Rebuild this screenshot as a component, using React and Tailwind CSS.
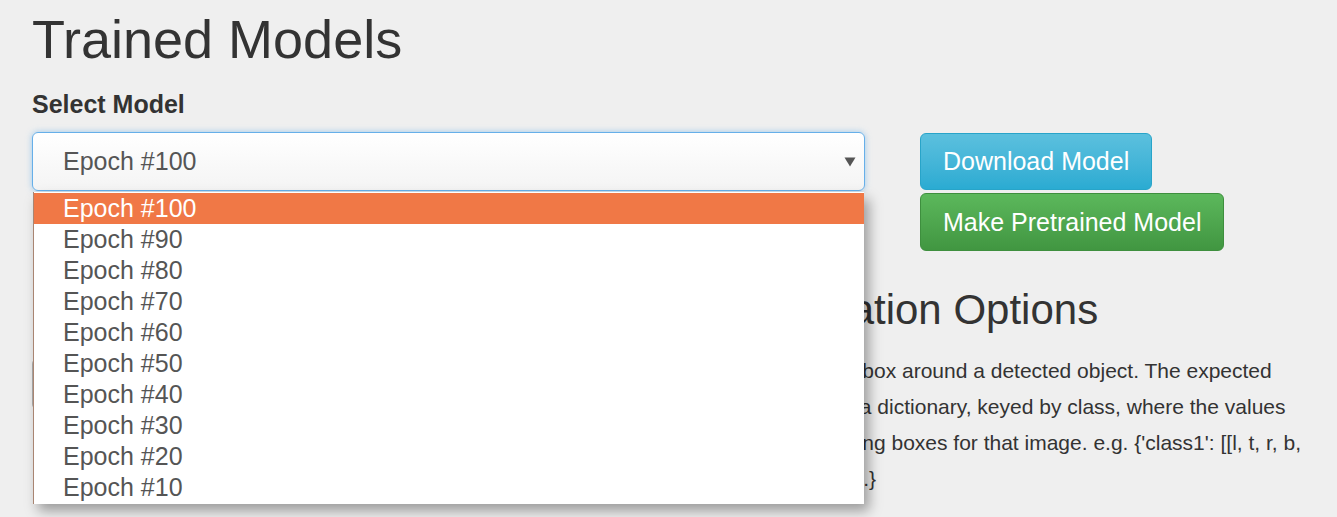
const epochs = [100, 90, 80, 70, 60, 50, 40, 30, 20, 10];

function ModelSelect() {
  return (
    <div className="relative w-[833px]">
      {/* closed select, focused */}
      <div className="flex h-[59px] items-center justify-between rounded-[6px] border border-[#66afe9] bg-gradient-to-b from-white to-[#f4f4f4] pl-[30px] pr-[8px] text-[25px] text-[#555] shadow-[0_0_6px_rgba(102,175,233,0.6)]">
        <span>Epoch #100</span>
        <svg width="12" height="10" viewBox="0 0 12 10">
          <path d="M0.5 0.5 L11.5 0.5 L6 9.5 Z" fill="#555" />
        </svg>
      </div>

      {/* open option list */}
      <ul className="absolute left-px right-px top-full z-10 mt-px border-l border-[#a98572] bg-white py-px text-[25px] text-[#555] shadow-[5px_7px_12px_rgba(0,0,0,0.35)]">
        {epochs.map((n, i) => (
          <li
            key={n}
            className={
              i === 0
                ? "h-[31px] bg-[#f07846] pl-[29px] leading-[31px] text-white"
                : "h-[31px] pl-[29px] leading-[31px]"
            }
          >
            Epoch #{n}
          </li>
        ))}
      </ul>
    </div>
  );
}

export default function App() {
  return (
    <div className="h-[517px] overflow-hidden bg-[#efefef] px-8 font-['Liberation_Sans',Arial,sans-serif] text-[#333]">
      <h1 className="pt-[10px] text-[54px] leading-[1.1]">Trained Models</h1>

      <label className="mt-[20px] block text-[25px] font-bold leading-[30px]">
        Select Model
      </label>

      <div className="mt-[13px] flex items-start gap-[55px]">
        <ModelSelect />
        <div className="mt-px flex flex-col items-start gap-[3px]">
          <button className="h-[57px] rounded-[6px] border border-[#28a4c9] bg-gradient-to-b from-[#5bc0de] to-[#2aabd2] px-[22px] text-[25px] text-white">
            Download Model
          </button>
          <button className="h-[58px] rounded-[6px] border border-[#3e8f3e] bg-gradient-to-b from-[#5cb85c] to-[#419641] px-[22px] text-[25px] text-white">
            Make Pretrained Model
          </button>
        </div>
      </div>

      <section className="mt-[36px] grid grid-cols-[406px_1fr] gap-x-8">
        <div>
          {/* preview well, mostly covered by the open list */}
          <div className="mt-[71px] h-[52px] w-[300px] rounded-[6px] border border-[#adadad] bg-[#e0e0e0]" />
        </div>
        <div>
          <h2 className="text-[42px] leading-[1.1]">Bounding Box Annotation Options</h2>
          <p className="mt-[19px] whitespace-nowrap text-[21px] leading-[36px]">
            Every annotation describes one bounding box around a detected object. The expected
            <br />
            input format for each training image file is a dictionary, keyed by class, where the values
            <br />
            are then lists of all the ground truth bounding boxes for that image. e.g. {"{'class1': [[l, t, r, b,"}
            <br />
            {"confidence]], 'class2': [[l, t, r, b, scoring]], ...}"}
          </p>
        </div>
      </section>
    </div>
  );
}
